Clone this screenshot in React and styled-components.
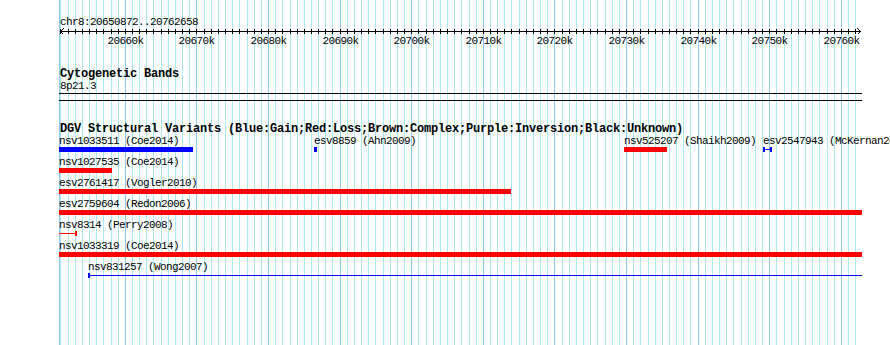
import React from 'react';
import styled, { createGlobalStyle } from 'styled-components';

const VIEW_START = 20650872;
const VIEW_END = 20762658;
const PX_PER_BP = 0.00716;
const CANVAS_WIDTH = 803;

const toX = (bp) => 0.5 + (bp - VIEW_START) * PX_PER_BP;

const GlobalStyle = createGlobalStyle`
  html, body {
    margin: 0;
    padding: 0;
    background: #fff;
    overflow: hidden;
  }
  body {
    font-family: "Liberation Mono", "DejaVu Sans Mono", monospace;
    color: #000;
  }
`;

const Page = styled.div`
  position: relative;
  width: 890px;
  height: 345px;
  overflow: hidden;
  background: #fff;
`;

const GridLayer = styled.svg`
  position: absolute;
  left: 59px;
  top: 0;
  width: ${CANVAS_WIDTH}px;
  height: 345px;
`;

const Content = styled.div`
  position: relative;
  display: flex;
  flex-direction: column;
  padding-left: 59px;
  width: ${CANVAS_WIDTH}px;
`;

const PlainText = styled.div`
  font-size: 11px;
  line-height: 11px;
  height: 11px;
  letter-spacing: -0.6px;
  white-space: nowrap;
  margin-top: ${(p) => p.$top || 0}px;
  padding-left: 1px;
`;

const TrackTitle = styled.div`
  font-size: 12px;
  line-height: 12px;
  height: 12px;
  font-weight: bold;
  letter-spacing: -0.2px;
  white-space: nowrap;
  margin-top: ${(p) => p.$top}px;
  padding-left: 1px;
`;

const Axis = styled.svg`
  display: block;
  width: ${CANVAS_WIDTH}px;
  height: 8px;
`;

const ScaleRow = styled.div`
  position: relative;
  height: 11px;
`;

const ScaleLabel = styled.span`
  position: absolute;
  top: 0;
  transform: translateX(-50%);
  font-size: 11px;
  line-height: 11px;
  letter-spacing: -0.6px;
  white-space: nowrap;
`;

const BandBox = styled.div`
  box-sizing: border-box;
  margin-top: 1px;
  height: 8px;
  border-top: 1px solid #000;
  border-bottom: 1px solid #000;
`;

const Rows = styled.div`
  display: flex;
  flex-direction: column;
  margin-top: 1px;
`;

const Row = styled.div`
  position: relative;
  height: 21px;
`;

const Feature = styled.div`
  position: absolute;
  top: 0;
  display: flex;
  flex-direction: column;
  align-items: flex-start;
`;

const FeatureLabel = styled.span`
  font-size: 11px;
  line-height: 11px;
  height: 11px;
  letter-spacing: -0.6px;
  white-space: nowrap;
`;

const Glyph = styled.div`
  display: flex;
  height: 5px;
  background: ${(p) => (p.$kind === 'box' ? p.$color : 'transparent')};
`;

const Cap = styled.span`
  width: 2px;
  flex: none;
  background: ${(p) => p.$color};
`;

const Stem = styled.span`
  flex: 1;
  background: linear-gradient(
    to bottom,
    transparent 2px,
    ${(p) => p.$color} 2px,
    ${(p) => p.$color} 3px,
    transparent 3px
  );
`;

const BLUE = '#0000ff';
const RED = '#ff0000';

// x0/x1 are pixel offsets inside the track canvas
const rows = [
  [
    { label: 'nsv1033511 (Coe2014)', x0: 0, x1: 134, color: BLUE, kind: 'box' },
    { label: 'esv8859 (Ahn2009)', x0: 255, x1: 258, color: BLUE, kind: 'box' },
    { label: 'nsv525207 (Shaikh2009)', x0: 565, x1: 608, color: RED, kind: 'box' },
    { label: 'esv2547943 (McKernan2009)', x0: 704, x1: 713, color: BLUE, kind: 'line', capL: true, capR: true },
  ],
  [{ label: 'nsv1027535 (Coe2014)', x0: 0, x1: 53, color: RED, kind: 'box' }],
  [{ label: 'esv2761417 (Vogler2010)', x0: 0, x1: 452, color: RED, kind: 'box' }],
  [{ label: 'esv2759604 (Redon2006)', x0: 0, x1: CANVAS_WIDTH, color: RED, kind: 'box' }],
  [{ label: 'nsv8314 (Perry2008)', x0: 0, x1: 18, color: RED, kind: 'line', capR: true }],
  [{ label: 'nsv1033319 (Coe2014)', x0: 0, x1: CANVAS_WIDTH, color: RED, kind: 'box' }],
  [{ label: 'nsv831257 (Wong2007)', x0: 29, x1: CANVAS_WIDTH, color: BLUE, kind: 'line', capL: true }],
];

const kbMarks = [];
for (let kb = Math.ceil(VIEW_START / 1000); kb * 1000 <= VIEW_END; kb++) {
  kbMarks.push({ kb, x: Math.round(toX(kb * 1000)), major: kb % 10 === 0 });
}

const Grid = () => (
  <GridLayer viewBox={`0 0 ${CANVAS_WIDTH} 345`} shapeRendering="crispEdges">
    <rect x={0} y={0} width={1} height={345} fill="#8ec8ec" />
    {kbMarks.map((m) => (
      <rect key={m.kb} x={m.x} y={0} width={1} height={345} fill={m.major ? '#8ec8ec' : '#aae9ef'} />
    ))}
  </GridLayer>
);

const Ruler = () => (
  <>
    <Axis viewBox={`0 0 ${CANVAS_WIDTH} 8`} shapeRendering="crispEdges">
      <line x1={1} y1={3.5} x2={802} y2={3.5} stroke="#000" strokeWidth="1" />
      {kbMarks.map((m) => (
        <rect key={m.kb} x={m.x} y={1} width={1} height={5} fill="#000" />
      ))}
      <polyline points="4.5,0.5 1.5,3.5 4.5,6.5" fill="none" stroke="#000" strokeWidth="1" />
      <polyline points="798.5,0.5 801.5,3.5 798.5,6.5" fill="none" stroke="#000" strokeWidth="1" />
    </Axis>
    <ScaleRow>
      {kbMarks
        .filter((m) => m.major)
        .map((m) => (
          <ScaleLabel key={m.kb} style={{ left: m.x + 0.5 }}>
            {m.kb}k
          </ScaleLabel>
        ))}
    </ScaleRow>
  </>
);

const VariantGlyph = ({ f }) => {
  const width = f.x1 - f.x0;
  if (f.kind === 'box') {
    return <Glyph $kind="box" $color={f.color} style={{ width }} />;
  }
  return (
    <Glyph $kind="line" style={{ width }}>
      {f.capL && <Cap $color={f.color} />}
      <Stem $color={f.color} />
      {f.capR && <Cap $color={f.color} />}
    </Glyph>
  );
};

export default function App() {
  return (
    <Page>
      <GlobalStyle />
      <Grid />
      <Content>
        <PlainText $top={17}>chr8:20650872..20762658</PlainText>
        <Ruler />

        <TrackTitle $top={21}>Cytogenetic Bands</TrackTitle>
        <PlainText $top={1}>8p21.3</PlainText>
        <BandBox />

        <TrackTitle $top={22}>
          DGV Structural Variants (Blue:Gain;Red:Loss;Brown:Complex;Purple:Inversion;Black:Unknown)
        </TrackTitle>
        <Rows>
          {rows.map((row, i) => (
            <Row key={i}>
              {row.map((f) => (
                <Feature key={f.label} style={{ left: f.x0 }}>
                  <FeatureLabel>{f.label}</FeatureLabel>
                  <VariantGlyph f={f} />
                </Feature>
              ))}
            </Row>
          ))}
        </Rows>
      </Content>
    </Page>
  );
}
